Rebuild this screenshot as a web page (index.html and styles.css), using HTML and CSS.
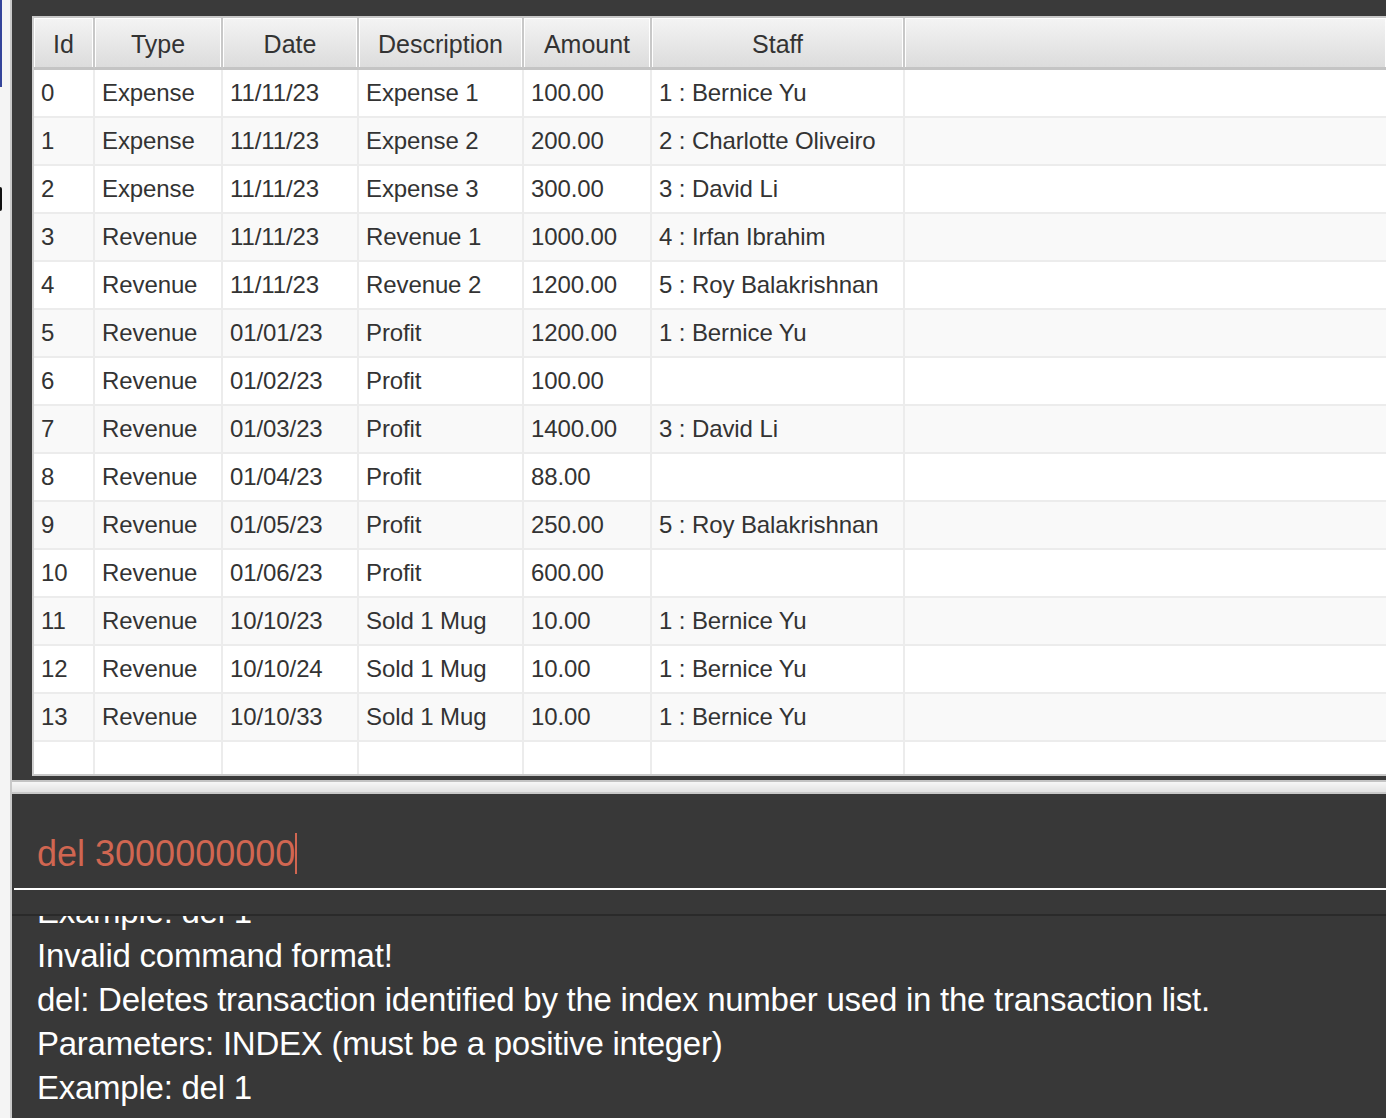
FILE: index.html
```html
<!DOCTYPE html>
<html lang="en">
<head>
<meta charset="utf-8">
<title>Transactions</title>
<link rel="stylesheet" href="styles.css">
</head>
<body>
<div class="app">
  <aside class="edge">
    <span class="edge-blue"></span>
    <span class="edge-gap"></span>
    <span class="edge-black"></span>
  </aside>
  <main class="main">
    <section class="list-pane">
      <div class="table-wrap">
        <table class="tx-table">
          <colgroup>
            <col class="c-id"><col class="c-type"><col class="c-date"><col class="c-desc"><col class="c-amount"><col class="c-staff"><col>
          </colgroup>
          <thead>
            <tr><th>Id</th><th>Type</th><th>Date</th><th>Description</th><th>Amount</th><th>Staff</th><th class="filler"></th></tr>
          </thead>
          <tbody>
            <tr><td>0</td><td>Expense</td><td>11/11/23</td><td>Expense 1</td><td>100.00</td><td>1 : Bernice Yu</td><td class="filler"></td></tr>
            <tr><td>1</td><td>Expense</td><td>11/11/23</td><td>Expense 2</td><td>200.00</td><td>2 : Charlotte Oliveiro</td><td class="filler"></td></tr>
            <tr><td>2</td><td>Expense</td><td>11/11/23</td><td>Expense 3</td><td>300.00</td><td>3 : David Li</td><td class="filler"></td></tr>
            <tr><td>3</td><td>Revenue</td><td>11/11/23</td><td>Revenue 1</td><td>1000.00</td><td>4 : Irfan Ibrahim</td><td class="filler"></td></tr>
            <tr><td>4</td><td>Revenue</td><td>11/11/23</td><td>Revenue 2</td><td>1200.00</td><td>5 : Roy Balakrishnan</td><td class="filler"></td></tr>
            <tr><td>5</td><td>Revenue</td><td>01/01/23</td><td>Profit</td><td>1200.00</td><td>1 : Bernice Yu</td><td class="filler"></td></tr>
            <tr><td>6</td><td>Revenue</td><td>01/02/23</td><td>Profit</td><td>100.00</td><td></td><td class="filler"></td></tr>
            <tr><td>7</td><td>Revenue</td><td>01/03/23</td><td>Profit</td><td>1400.00</td><td>3 : David Li</td><td class="filler"></td></tr>
            <tr><td>8</td><td>Revenue</td><td>01/04/23</td><td>Profit</td><td>88.00</td><td></td><td class="filler"></td></tr>
            <tr><td>9</td><td>Revenue</td><td>01/05/23</td><td>Profit</td><td>250.00</td><td>5 : Roy Balakrishnan</td><td class="filler"></td></tr>
            <tr><td>10</td><td>Revenue</td><td>01/06/23</td><td>Profit</td><td>600.00</td><td></td><td class="filler"></td></tr>
            <tr><td>11</td><td>Revenue</td><td>10/10/23</td><td>Sold 1 Mug</td><td>10.00</td><td>1 : Bernice Yu</td><td class="filler"></td></tr>
            <tr><td>12</td><td>Revenue</td><td>10/10/24</td><td>Sold 1 Mug</td><td>10.00</td><td>1 : Bernice Yu</td><td class="filler"></td></tr>
            <tr><td>13</td><td>Revenue</td><td>10/10/33</td><td>Sold 1 Mug</td><td>10.00</td><td>1 : Bernice Yu</td><td class="filler"></td></tr>
            <tr class="row-empty"><td></td><td></td><td></td><td></td><td></td><td></td><td class="filler"></td></tr>
          </tbody>
        </table>
      </div>
    </section>
    <div class="divider"></div>
    <section class="command-box">
      <div class="command-field"><span class="command-text">del 3000000000</span></div>
    </section>
    <section class="result-display">
      <div class="result-lines">
        <p>Parameters: INDEX (must be a positive integer)</p>
        <p>Example: del 1</p>
        <p>Invalid command format!</p>
        <p>del: Deletes transaction identified by the index number used in the transaction list.</p>
        <p>Parameters: INDEX (must be a positive integer)</p>
        <p>Example: del 1</p>
      </div>
    </section>
  </main>
</div>
</body>
</html>
```

FILE: styles.css
```css
html, body {
  margin: 0;
  height: 100%;
  overflow: hidden;
}

body {
  font-family: "Liberation Sans", Arial, sans-serif;
  background: #3a3a3a;
}

.app {
  display: flex;
  height: 100vh;
}

/* desktop strip at the far left */
.edge {
  flex: none;
  width: 10px;
  background: #f4f4f4;
  border-right: 2px solid #c9c9c9;
  display: flex;
  flex-direction: column;
}

.edge-blue {
  width: 2px;
  height: 87px;
  background: #34449a;
}

.edge-gap {
  height: 100px;
}

.edge-black {
  width: 2px;
  height: 24px;
  background: #111;
  border-radius: 0 2px 2px 0;
}

.main {
  flex: 1;
  min-width: 0;
  display: flex;
  flex-direction: column;
  background: #3a3a3a;
}

/* transaction list */
.list-pane {
  padding: 16px 0 4px 20px;
}

.table-wrap {
  border-top: 2px solid #c8c8c8;
  border-bottom: 2px solid #c8c8c8;
  border-left: 2px solid #cfcfcf;
  background: #fff;
}

.tx-table {
  width: 100%;
  table-layout: fixed;
  border-collapse: separate;
  border-spacing: 0;
  font-size: 24px;
  color: #333;
}

.c-id { width: 61px; }
.c-type { width: 128px; }
.c-date { width: 136px; }
.c-desc { width: 165px; }
.c-amount { width: 128px; }
.c-staff { width: 253px; }

.tx-table th {
  box-sizing: border-box;
  padding: 4px 0 0;
  line-height: 45px;
  font-size: 25px;
  font-weight: normal;
  text-align: center;
  color: #333;
  background: linear-gradient(#f4f4f4, #dcdcdc);
  border-right: 2px solid #c8c8c8;
  border-bottom: 3px solid #c4c4c4;
  box-shadow: inset 1px 1px 0 #fff, inset -1px 0 0 #fff;
  white-space: nowrap;
  overflow: hidden;
}

.tx-table td {
  padding: 0 0 0 7px;
  height: 46px;
  line-height: 46px;
  border-right: 2px solid #ececec;
  border-bottom: 2px solid #ececec;
  background: #fff;
  white-space: nowrap;
  overflow: hidden;
  letter-spacing: -0.1px;
}

.tx-table tbody tr:nth-child(even) td {
  background: #f9f9f9;
}

.tx-table .row-empty td {
  height: 32px;
  line-height: 32px;
  border-bottom: none;
}

.tx-table .filler {
  border-right: none;
}

/* split pane divider */
.divider {
  height: 10px;
  border-top: 2px solid #c3c3c3;
  border-bottom: 2px solid #c9c9c9;
  background: linear-gradient(#f6f6f6, #e2e2e2);
}

/* command box */
.command-box {
  background: #383838;
  padding: 38px 0 24px 2px;
  border-bottom: 2px solid #2a2a2a;
}

.command-field {
  padding: 0 0 12px 23px;
  border-bottom: 2px solid #fff;
  font-size: 36px;
  line-height: 44px;
  color: #d06651;
  white-space: nowrap;
}

.command-text {
  border-right: 2px solid #d06651;
}

/* result display */
.result-display {
  flex: 1;
  min-height: 0;
  display: flex;
  flex-direction: column;
  justify-content: flex-end;
  overflow: hidden;
  background: #383838;
  padding: 0 0 8px 25px;
  color: #fff;
  font-size: 33px;
  line-height: 44px;
  letter-spacing: -0.25px;
}

.result-lines p {
  margin: 0;
  white-space: nowrap;
}
```
